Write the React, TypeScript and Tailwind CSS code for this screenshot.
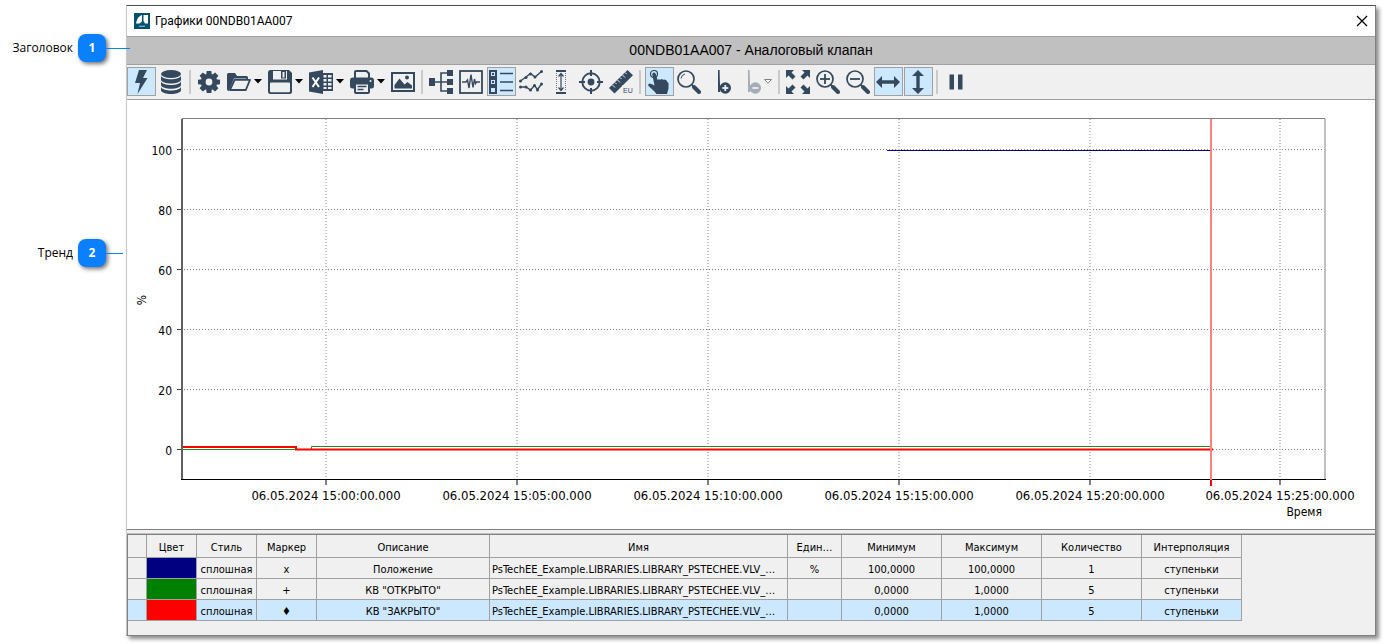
import type { ReactNode } from "react";

const INK = "#34495e";

function Icon({ children, className = "" }: { children: ReactNode; className?: string }) {
  return (
    <svg viewBox="0 0 24 24" className={`h-6 w-6 shrink-0 ${className}`} fill={INK} aria-hidden="true">
      {children}
    </svg>
  );
}

const BoltIcon = () => (
  <Icon><path d="M10 0h8l-4 8h4.500L8.500 24l2.500-11H6z" /></Icon>
);

const DatabaseIcon = () => (
  <Icon>
    <ellipse cx="12" cy="4" rx="10" ry="4" />
    <path d="M2 5.500c1 5 19 5 20 0v4.300c-1 5-19 5-20 0z" />
    <path d="M2 11.300c1 5 19 5 20 0v3.800c-1 5-19 5-20 0z" />
    <path d="M2 16.700c1 5 19 5 20 0v3.500c-1 5-19 5-20 0z" />
  </Icon>
);

const GearIcon = () => (
  <Icon>
    {[0, 45, 90, 135].map((a) => (
      <path key={a} d="M9.700 1h4.600l.5 4v14l-.5 4H9.700l-.5-4V5z" transform={`rotate(${a} 12 12)`} />
    ))}
    <circle cx="12" cy="12" r="8.200" />
    <circle cx="12" cy="12" r="3.400" fill="#f0f0f0" />
  </Icon>
);

const FolderIcon = () => (
  <Icon>
    <path d="M0 4.500Q0 3 1.500 3H8l2 3h9.500Q21 6 21 7.500V10h-1.800V8.600H7L2.600 19.500 1.800 21Q0 21 0 19z" />
    <path d="M7.600 9.800H23L18.800 20H3z" fill="#f0f0f0" stroke={INK} strokeWidth="1.800" strokeLinejoin="round" />
  </Icon>
);

const SaveIcon = () => (
  <Icon>
    <path d="M2.500 0H21l3 3v18.500Q24 24 21.500 24h-19Q0 24 0 21.500v-19Q0 0 2.500 0z" />
    <rect x="5" y="1" width="14" height="8.500" fill="#f0f0f0" />
    <rect x="13" y="1" width="5" height="7.500" />
    <rect x="14.500" y="2" width="2" height="5.500" fill="#f0f0f0" />
    <rect x="2" y="12.500" width="20" height="9.700" rx="1" fill="#f0f0f0" />
  </Icon>
);

const ExcelIcon = () => (
  <Icon>
    <path d="M0 2.500 14 0v24L0 21.500z" />
    <path d="M3.500 7.500 10 17M10 7.500 3.500 17" stroke="#fff" strokeWidth="2" />
    <path d="M14 3h10v18H14z" />
    <path d="M14.500 5h3v2.500h-3zM19 5h3.500v2.500H19zM14.500 9h3v2.500h-3zM19 9h3.500v2.500H19zM14.500 13h3v2.500h-3zM19 13h3.500v2.500H19zM14.500 17h3v2h-3zM19 17h3.500v2H19z" fill="#f0f0f0" />
  </Icon>
);

const PrintIcon = () => (
  <Icon>
    <path d="M5 8V1.800Q5 1 6 1h10.500L19 3.500V8" fill="#f0f0f0" stroke={INK} strokeWidth="2" />
    <path d="M3 7.500h18q3 0 3 3V16q0 2.500-2.500 2.500H19V14H5v4.500H2.500Q0 18.500 0 16v-5.500q0-3 3-3z" />
    <rect x="5" y="13.500" width="14" height="9.500" rx="1" fill="#f0f0f0" stroke={INK} strokeWidth="2" />
    <path d="M7.500 16.500h9M7.500 19.500h6" stroke={INK} strokeWidth="1.400" />
    <circle cx="20.500" cy="11" r="1" fill="#f0f0f0" />
  </Icon>
);

const ImageIcon = () => (
  <Icon>
    <path d="M0 2h24v20H0z" />
    <path d="M2 4h20v16H2z" fill="#f0f0f0" />
    <path d="M3.500 18.500V15l5-6.500 5 6 3-2.500 4.500 3.500v3z" />
    <circle cx="16" cy="7.500" r="2" />
  </Icon>
);

const TreeIcon = () => (
  <Icon>
    <path d="M0 8h6v8H0zM18 0h6v6h-6zM18 9h6v6h-6zM18 18h6v6h-6z" />
    <path d="M6 12h12M18 3h-6v18h6" fill="none" stroke={INK} strokeWidth="1.600" />
  </Icon>
);

const PulseIcon = () => (
  <Icon>
    <rect x="1" y="1" width="22" height="22" fill="none" stroke={INK} strokeWidth="1.800" />
    <path d="M3 12h4l1.500-2 1.500 8L12 4.500l2 13L15.500 9l1 4.500 1-1.500H21" fill="none" stroke={INK} strokeWidth="1.400" />
  </Icon>
);

const LegendIcon = () => (
  <Icon>
    <g fill="none" stroke={INK}>
      <path d="M1 1h6v6H1zM1 9h6v6H1zM1 17h6v6H1z" strokeWidth="2" />
      <path d="M11 3.500h13M11 12h13M11 20.500h13" strokeWidth="1.400" />
    </g>
    <path d="M3 3h2v2H3zM3 11h2v2H3z" />
  </Icon>
);

const LinesIcon = () => (
  <Icon>
    <path d="M1.500 11 7 7l4.500-3.500L16 7l6.500-5.500M1.500 17H7l4.500 3 4-4.500 3 4L22.500 14" fill="none" stroke={INK} strokeWidth="1.400" />
    {[[1.5, 11], [7, 7.5], [11.5, 4], [16, 7], [22.5, 1.5], [1.5, 17], [7, 17], [11.5, 20], [15.5, 15.5], [18.5, 20], [22.5, 14]].map(([x, y]) => (
      <circle key={`${x}-${y}`} cx={x} cy={y} r="1.500" />
    ))}
  </Icon>
);

const RangeIcon = () => (
  <Icon>
    <path d="M7 1h10M7 23h10" stroke={INK} strokeWidth="2" />
    <path d="M7.500 3v18M16.500 3v18" stroke={INK} strokeDasharray="1 1" opacity=".7" />
    <path d="M12 4v16M9.500 6.500 12 3.500l2.500 3M9.500 17.500l2.500 3 2.500-3" fill="none" stroke={INK} strokeWidth="1.200" />
  </Icon>
);

const TargetIcon = () => (
  <Icon>
    <circle cx="12" cy="12" r="8.700" fill="none" stroke={INK} strokeWidth="1.900" />
    <circle cx="12" cy="12" r="3.400" />
    <path d="M12 0v6M12 18v6M0 12h6M18 12h6" stroke={INK} strokeWidth="2" />
  </Icon>
);

const RulerIcon = () => (
  <Icon>
    <path d="M0 18 18.500 0 24 5.200 5.500 23.500z" />
    <path d="m3.500 15 2.500 2.500M6 12.500l1.500 1.500M8.500 10l2.500 2.500M11 7.500 12.500 9M13.500 5l2.500 2.500M16 2.500 17.500 4" stroke="#f0f0f0" strokeWidth="1" />
    <path d="M13 15.500h11V24H13z" fill="#f0f0f0" />
    <text x="14" y="23" fontSize="7" fontFamily="Liberation Sans, sans-serif">EU</text>
  </Icon>
);

const HandIcon = () => (
  <Icon>
    <circle cx="7" cy="4" r="3.500" fill="none" stroke={INK} strokeWidth="1.200" />
    <path d="M5.200 4.500Q5.500 2.500 7 2.500t2 2L10.500 10l1-.7 2 .5 1-.7 2 .7 1.200-.4 2 1 .3 1.200 1.500 1.500v5.500L20 24H9.500L7 21l-5-4.500Q.500 15 1.500 14t3 0l3 1.500z" />
  </Icon>
);

const Lens = ({ sign }: { sign?: "+" | "-" }) => (
  <Icon>
    <circle cx="9" cy="9" r="8" fill="none" stroke={INK} strokeWidth="1.700" />
    <path d="m14.700 14.700 2 2" stroke={INK} strokeWidth="1.800" />
    <path d="m17 17 5 5" stroke={INK} strokeWidth="4" strokeLinecap="round" />
    {sign && <path d="M4 9h10" stroke={INK} strokeWidth="1.800" />}
    {sign === "+" && <path d="M9 4v10" stroke={INK} strokeWidth="1.800" />}
    {!sign && <path d="M4 8.500Q4.500 4.800 8 4" fill="none" stroke={INK} strokeWidth="1" />}
  </Icon>
);

const MarkIcon = ({ sign }: { sign: "+" | "-" }) => (
  <Icon className={sign === "-" ? "opacity-40" : ""}>
    <path d="M11 0h1.600l.6 22H11z" />
    <circle cx="18.300" cy="18" r="5.700" />
    <path d="M15.300 18h6" stroke="#f0f0f0" strokeWidth="1.800" />
    {sign === "+" && <path d="M18.300 15v6" stroke="#f0f0f0" strokeWidth="1.800" />}
  </Icon>
);

const ExpandIcon = () => (
  <Icon>
    {[0, 90, 180, 270].map((a) => (
      <path key={a} d="M0 0h8L5.500 2.500l4 4-3 3-4-4L0 8z" transform={`rotate(${a} 12 12)`} />
    ))}
  </Icon>
);

const ArrowsIcon = ({ vertical = false }: { vertical?: boolean }) => (
  <Icon className={vertical ? "rotate-90" : ""}>
    <path d="m0 12 6-6v4.300h12V6l6 6-6 6v-4.300H6V18z" />
  </Icon>
);

const PauseIcon = () => (
  <Icon><path d="M5.500 4.500H10v15H5.500zM14 4.500h4.500v15H14z" /></Icon>
);

type Tool =
  | "|"
  | { label: string; icon: ReactNode; active?: boolean; menu?: "solid" | "hollow" };

const tools: Tool[] = [
  { label: "Оперативный режим", icon: <BoltIcon />, active: true },
  { label: "Архив", icon: <DatabaseIcon /> },
  "|",
  { label: "Настройки", icon: <GearIcon /> },
  { label: "Открыть", icon: <FolderIcon />, menu: "solid" },
  { label: "Сохранить", icon: <SaveIcon />, menu: "solid" },
  { label: "Экспорт в Excel", icon: <ExcelIcon />, menu: "solid" },
  { label: "Печать", icon: <PrintIcon />, menu: "solid" },
  { label: "Изображение", icon: <ImageIcon /> },
  "|",
  { label: "Дерево", icon: <TreeIcon /> },
  { label: "Сигнал", icon: <PulseIcon /> },
  { label: "Легенда", icon: <LegendIcon />, active: true },
  { label: "Графики", icon: <LinesIcon /> },
  { label: "Диапазон", icon: <RangeIcon /> },
  { label: "Центрировать", icon: <TargetIcon /> },
  { label: "Единицы измерения", icon: <RulerIcon /> },
  "|",
  { label: "Выбор", icon: <HandIcon />, active: true },
  { label: "Лупа", icon: <Lens /> },
  { label: "Добавить визир", icon: <MarkIcon sign="+" /> },
  { label: "Удалить визир", icon: <MarkIcon sign="-" />, menu: "hollow" },
  "|",
  { label: "Показать всё", icon: <ExpandIcon /> },
  { label: "Увеличить", icon: <Lens sign="+" /> },
  { label: "Уменьшить", icon: <Lens sign="-" /> },
  { label: "По горизонтали", icon: <ArrowsIcon />, active: true },
  { label: "По вертикали", icon: <ArrowsIcon vertical />, active: true },
  "|",
  { label: "Пауза", icon: <PauseIcon /> },
];

function Toolbar() {
  return (
    <div role="toolbar" className="flex items-center gap-px overflow-hidden border-b border-[#a0a0a0] bg-[#f0f0f0] pt-[2px] pb-[3px]">
      {tools.map((tool, i) =>
        tool === "|" ? (
          <span key={i} className="flex w-[7px] shrink-0 pl-0.5">
            <span className="h-6 w-0.5 bg-[#c9c9c9]" />
          </span>
        ) : (
          <button
            key={i}
            type="button"
            aria-label={tool.label}
            aria-pressed={tool.active}
            className={`flex h-[29px] shrink-0 items-center border pl-px ${tool.menu ? "w-10 gap-[3px]" : "w-[29px]"} ${
              tool.active ? "border-[#a0a0a0] bg-[#cce8ff]" : "border-transparent"
            }`}
          >
            {tool.icon}
            {tool.menu && (
              <svg viewBox="0 0 8 5" className="h-[5px] w-2 shrink-0" aria-hidden="true">
                {tool.menu === "solid" ? (
                  <path d="M0 0h8L4 4.500z" fill="#000" />
                ) : (
                  <path d="M.500.500h7L4 4.200z" fill="#fff" stroke="#808080" />
                )}
              </svg>
            )}
          </button>
        ),
      )}
    </div>
  );
}

const xTicks = [
  { x: 199, label: "06.05.2024 15:00:00.000" },
  { x: 390, label: "06.05.2024 15:05:00.000" },
  { x: 581, label: "06.05.2024 15:10:00.000" },
  { x: 772, label: "06.05.2024 15:15:00.000" },
  { x: 963, label: "06.05.2024 15:20:00.000" },
  { x: 1153, label: "06.05.2024 15:25:00.000" },
];
const yTicks = [0, 20, 40, 60, 80, 100];
const yPos = (v: number) => 349.5 - v * 3;

function Chart() {
  return (
    <svg viewBox="0 0 1248 429" className="block w-full bg-white font-['DejaVu_Sans_Condensed','DejaVu_Sans',sans-serif] text-xs" role="img" aria-label="Тренд">
      {yTicks.map((v) => (
        <g key={v}>
          <path d={`M57 ${yPos(v)}H1199`} stroke="#808080" strokeDasharray="1 2" />
          <path d={`M50 ${yPos(v)}h5`} stroke="#404040" />
          <text x="45" y={yPos(v) + 5.5} textAnchor="end">{v}</text>
        </g>
      ))}
      {xTicks.map(({ x, label }) => (
        <g key={x}>
          <path d={`M${x} 19V379`} stroke="#c0c0c0" strokeWidth="2" strokeDasharray="1 2" />
          <path d={`M${x} 380v5`} stroke="#808080" strokeWidth="2" />
          <text x={x} y="400" textAnchor="middle" className="text-[13px]">{label}</text>
        </g>
      ))}
      <path d="M55 18.500H1198" stroke="#808080" />
      <path d="M1198 19V379" stroke="#c0c0c0" strokeWidth="2" />
      <path d="M55 19V380" stroke="#606060" strokeWidth="2" />
      <path d="M54 379.500H1199" stroke="#000" />
      <path d="M56 349.500H184.500V346.500H1084" fill="none" stroke="#228b22" />
      <path d="M760 50.500H1084" stroke="#000080" />
      <path d="M56 347H169V349.500H1086" fill="none" stroke="#ff0000" strokeWidth="2" />
      <path d="M1084 19V380" stroke="#ff8080" strokeWidth="2" />
      <path d="M1084 380v6" stroke="#ff0000" strokeWidth="2" />
      <text x="19" y="200" textAnchor="middle" transform="rotate(-90 19 200)">%</text>
      <text x="1195" y="416" textAnchor="end">Время</text>
    </svg>
  );
}

const headers = ["", "Цвет", "Стиль", "Маркер", "Описание", "Имя", "Един…", "Минимум", "Максимум", "Количество", "Интерполяция"];
const longName = "PsTechEE_Example.LIBRARIES.LIBRARY_PSTECHEE.VLV_…";
const rows = [
  { color: "bg-[#000080]", marker: "x", title: "Положение", unit: "%", min: "100,0000", max: "100,0000", count: 1 },
  { color: "bg-[#008000]", marker: "+", title: 'КВ "ОТКРЫТО"', unit: "", min: "0,0000", max: "1,0000", count: 5 },
  { color: "bg-[#ff0000]", marker: "♦", title: 'КВ "ЗАКРЫТО"', unit: "", min: "0,0000", max: "1,0000", count: 5, selected: true },
];

const cell = "overflow-hidden whitespace-nowrap border-r border-b border-[#a0a0a0] px-0 pt-[3px] pb-0 font-normal";

function SignalTable() {
  return (
    <div className="overflow-hidden border-t border-l border-[#808080] bg-[#f0f0f0] pb-3.5">
      <table className="w-[1114px] table-fixed border-separate border-spacing-0 text-center font-['DejaVu_Sans_Condensed','DejaVu_Sans',sans-serif] text-[11px] leading-[17px]">
        <colgroup>
          <col className="w-[19px]" />
          <col className="w-[50px]" />
          <col className="w-[60px]" />
          <col className="w-[60px]" />
          <col className="w-[173px]" />
          <col className="w-[298px]" />
          <col className="w-[54px]" />
          <col className="w-[100px]" />
          <col className="w-[100px]" />
          <col className="w-[100px]" />
          <col className="w-[100px]" />
        </colgroup>
        <thead>
          <tr className="h-[23px]">
            {headers.map((h, i) => (
              <th key={i} scope="col" className={cell}>{h}</th>
            ))}
          </tr>
        </thead>
        <tbody>
          {rows.map((r) => (
            <tr key={r.title} className={`h-[21px] ${r.selected ? "bg-[#cce8ff]" : ""}`}>
              <td className={cell} />
              <td className={`${cell} ${r.color}`} />
              <td className={cell}>сплошная</td>
              <td className={cell}>{r.marker}</td>
              <td className={cell}>{r.title}</td>
              <td className={cell}>
                <span className="block pl-0.5 text-left">{longName}</span>
              </td>
              <td className={cell}>{r.unit}</td>
              <td className={cell}>{r.min}</td>
              <td className={cell}>{r.max}</td>
              <td className={cell}>{r.count}</td>
              <td className={cell}>ступеньки</td>
            </tr>
          ))}
        </tbody>
      </table>
    </div>
  );
}

function Callout({ label, number, line }: { label: string; number: number; line: string }) {
  return (
    <div className="flex items-center">
      <span className="w-[73px] shrink-0 text-right text-xs">{label}</span>
      <span className="ml-[5px] flex h-7 w-7 shrink-0 items-center justify-center rounded-lg bg-[#0a80ff] text-xs font-bold text-white shadow-[2px_2px_4px_rgba(0,0,0,0.55)]">
        {number}
      </span>
      <span className={`h-px shrink-0 bg-[#0a80ff] ${line}`} />
    </div>
  );
}

export default function App() {
  return (
    <div className="flex items-start bg-white pt-[5px] pr-[9px] pb-[9px] font-['Open_Sans',sans-serif] text-black">
      <aside className="z-10 flex w-[126px] shrink-0 flex-col gap-[177px] pt-[29px]">
        <Callout label="Заголовок" number={1} line="w-6" />
        <Callout label="Тренд" number={2} line="w-[17px]" />
      </aside>
      <main className="min-w-0 flex-1 border border-t-[#505050] border-r-[#808080] border-b-[#808080] border-l-[#c8c8c8] shadow-[3px_3px_4px_rgba(0,0,0,0.45)]">
        <header className="flex h-[30px] items-center bg-white pr-[7px] pl-[7px]">
          <svg viewBox="0 0 16 16" className="h-4 w-4" aria-hidden="true">
            <path d="M0 0h16v16H0z" fill="#04506f" />
            <path d="M2 10.500 3 7q1.500-4 5-5v6.500L5.500 10.500z" fill="#fff" />
            <path d="M9.500 2H14v8.500h-3L9.500 8z" fill="#fff" />
            <path d="M5 13.300h6" stroke="#7eb0c4" strokeWidth="1.300" />
          </svg>
          <h1 className="ml-[5px] flex-1 font-[Roboto,sans-serif] text-xs">Графики 00NDB01AA007</h1>
          <button type="button" aria-label="Закрыть">
            <svg viewBox="0 0 12 12" className="h-3 w-3" aria-hidden="true">
              <path d="m1 1 10 10M11 1 1 11" stroke="#000" strokeWidth="1.200" />
            </svg>
          </button>
        </header>
        <h2 className="border-y border-[#a0a0a0] bg-[#c0c0c0] text-center font-['Liberation_Sans',sans-serif] text-sm leading-[27px]">
          00NDB01AA007 - Аналоговый клапан
        </h2>
        <Toolbar />
        <Chart />
        <div className="h-[5px] border-t border-b border-t-[#808080] border-b-[#c0c0c0] bg-[#f0f0f0]" />
        <SignalTable />
      </main>
    </div>
  );
}
